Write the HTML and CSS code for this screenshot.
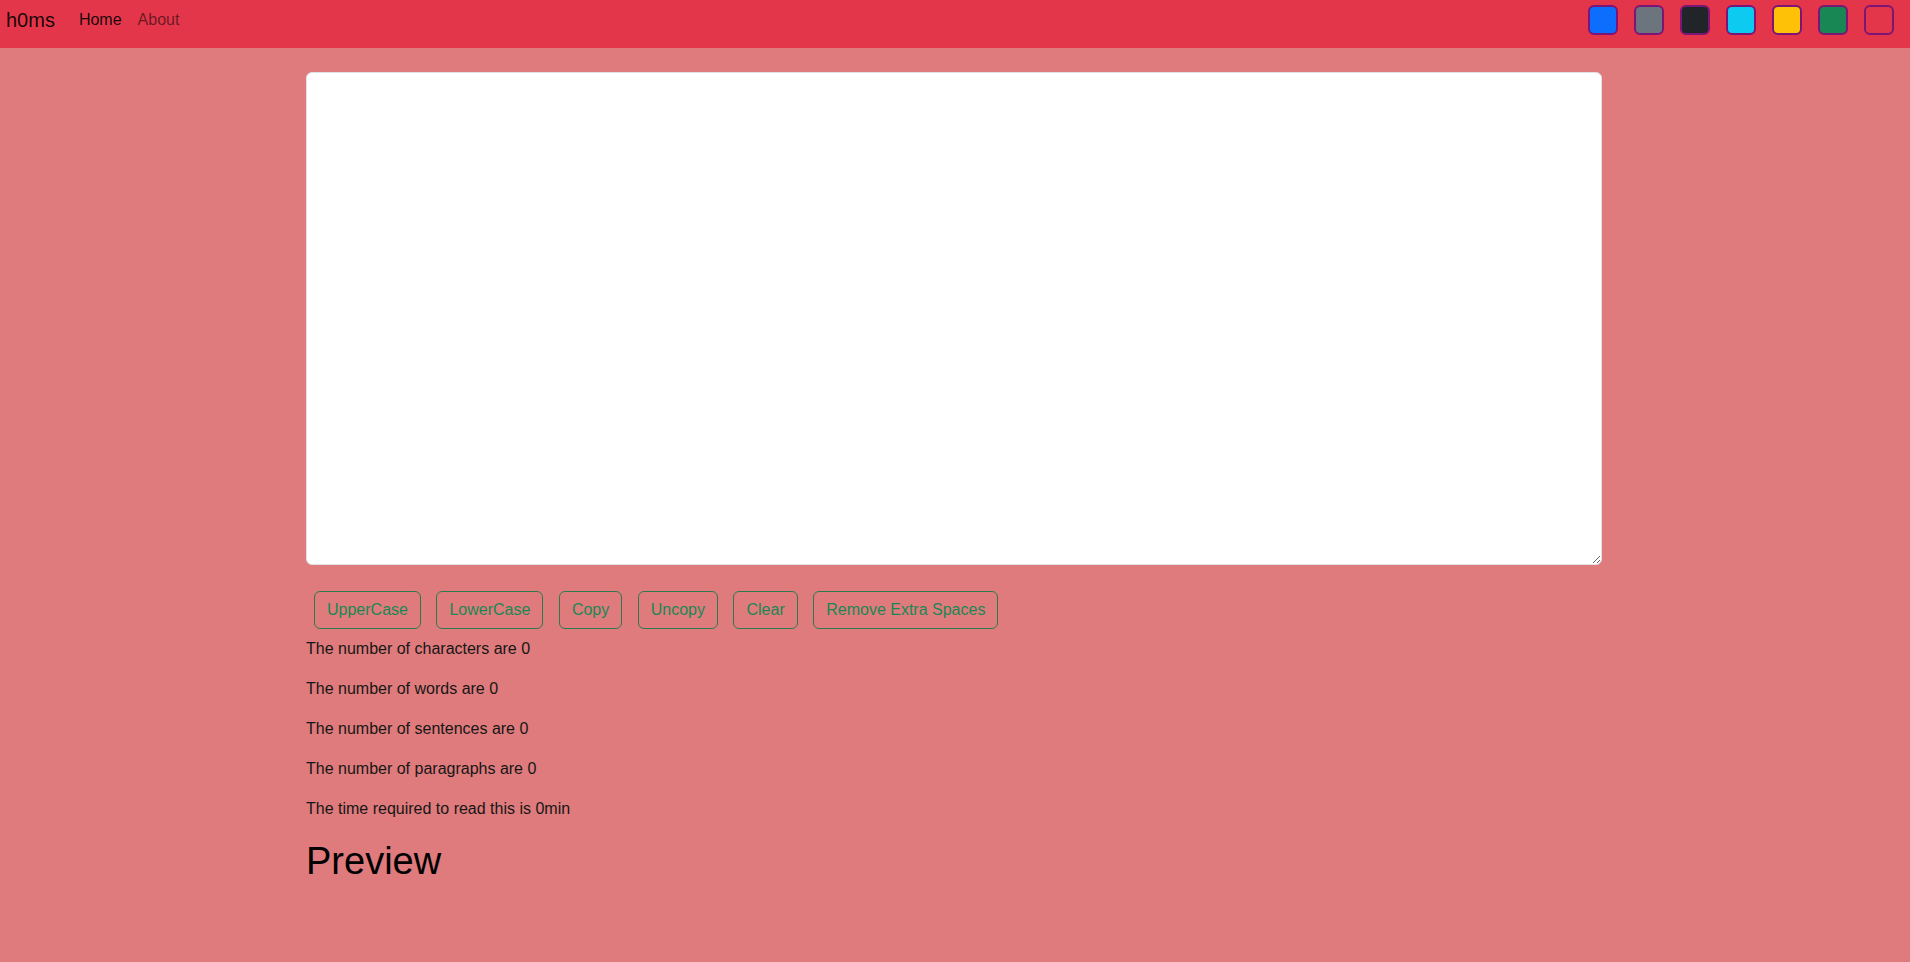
FILE: index.html
```html
<!DOCTYPE html>
<html lang="en">
<head>
<meta charset="utf-8">
<title>TextUtils</title>
<link rel="stylesheet" href="styles.css">
</head>
<body>
<nav class="navbar">
  <div class="nav-left">
    <a class="brand" href="#">h0ms</a>
    <a class="nav-link active" href="#">Home</a>
    <a class="nav-link" href="#">About</a>
  </div>
  <div class="swatches">
    <div class="swatch sw-primary"></div>
    <div class="swatch sw-secondary"></div>
    <div class="swatch sw-dark"></div>
    <div class="swatch sw-info"></div>
    <div class="swatch sw-warning"></div>
    <div class="swatch sw-success"></div>
    <div class="swatch sw-danger"></div>
  </div>
</nav>
<main class="container">
  <textarea class="text-input" rows="20"></textarea>
  <div class="btn-row">
    <button class="btn">UpperCase</button>
    <button class="btn">LowerCase</button>
    <button class="btn">Copy</button>
    <button class="btn">Uncopy</button>
    <button class="btn">Clear</button>
    <button class="btn">Remove Extra Spaces</button>
  </div>
  <p class="stat">The number of characters are 0</p>
  <p class="stat">The number of words are 0</p>
  <p class="stat">The number of sentences are 0</p>
  <p class="stat">The number of paragraphs are 0</p>
  <p class="stat">The time required to read this is 0min</p>
  <h1 class="preview-title">Preview</h1>
</main>
</body>
</html>
```
FILE: styles.css
```css
* { box-sizing: border-box; }
html, body { margin: 0; }
body {
  background: #df7b7c;
  font-family: "Liberation Sans", Arial, sans-serif;
  font-size: 16px;
  line-height: 1.5;
  color: #161616;
  min-height: 962px;
}
.navbar {
  height: 48px;
  background: #e4364b;
  display: flex;
  justify-content: space-between;
  align-items: flex-start;
  padding: 5px 16px 0 6px;
}
.nav-left {
  display: flex;
  align-items: flex-start;
}
.brand {
  font-size: 20px;
  line-height: 30px;
  color: rgba(0, 0, 0, 0.9);
  text-decoration: none;
  margin-right: 16px;
}
.nav-link {
  padding: 3px 8px 0;
  line-height: 24px;
  color: rgba(0, 0, 0, 0.55);
  text-decoration: none;
}
.nav-link.active { color: rgba(0, 0, 0, 0.9); }
.swatches {
  display: flex;
  gap: 16px;
}
.swatch {
  width: 30px;
  height: 30px;
  border: 2px solid #7d1577;
  border-radius: 6px;
}
.sw-primary { background: #0d6efd; }
.sw-secondary { background: #6c757d; }
.sw-dark { background: #212529; }
.sw-info { background: #0dcaf0; }
.sw-warning { background: #ffc107; }
.sw-success { background: #198754; }
.sw-danger { background: #e4364b; }
.container {
  width: 1296px;
  margin-left: calc(50% - 649px);
  padding-top: 24px;
}
.text-input {
  display: block;
  width: 100%;
  height: 493px;
  padding: 6px 12px;
  font: inherit;
  background: #fff;
  border: 1px solid #dee2e6;
  border-radius: 6px;
  color: #212529;
}
.btn-row {
  display: flex;
  gap: 15.5px;
  padding-left: 8px;
  margin-top: 26px;
  margin-bottom: 8px;
}
.btn {
  font-family: inherit;
  font-size: 16px;
  line-height: 24px;
  padding: 6px 12px;
  color: #198754;
  background: transparent;
  border: 1px solid #2b7a4f;
  border-radius: 6px;
}
.stat {
  margin: 0 0 16px;
  line-height: 24px;
}
.preview-title {
  font-size: 38px;
  font-weight: 500;
  line-height: 1.2;
  margin: 18px 0 8px;
  color: #000;
}
```
